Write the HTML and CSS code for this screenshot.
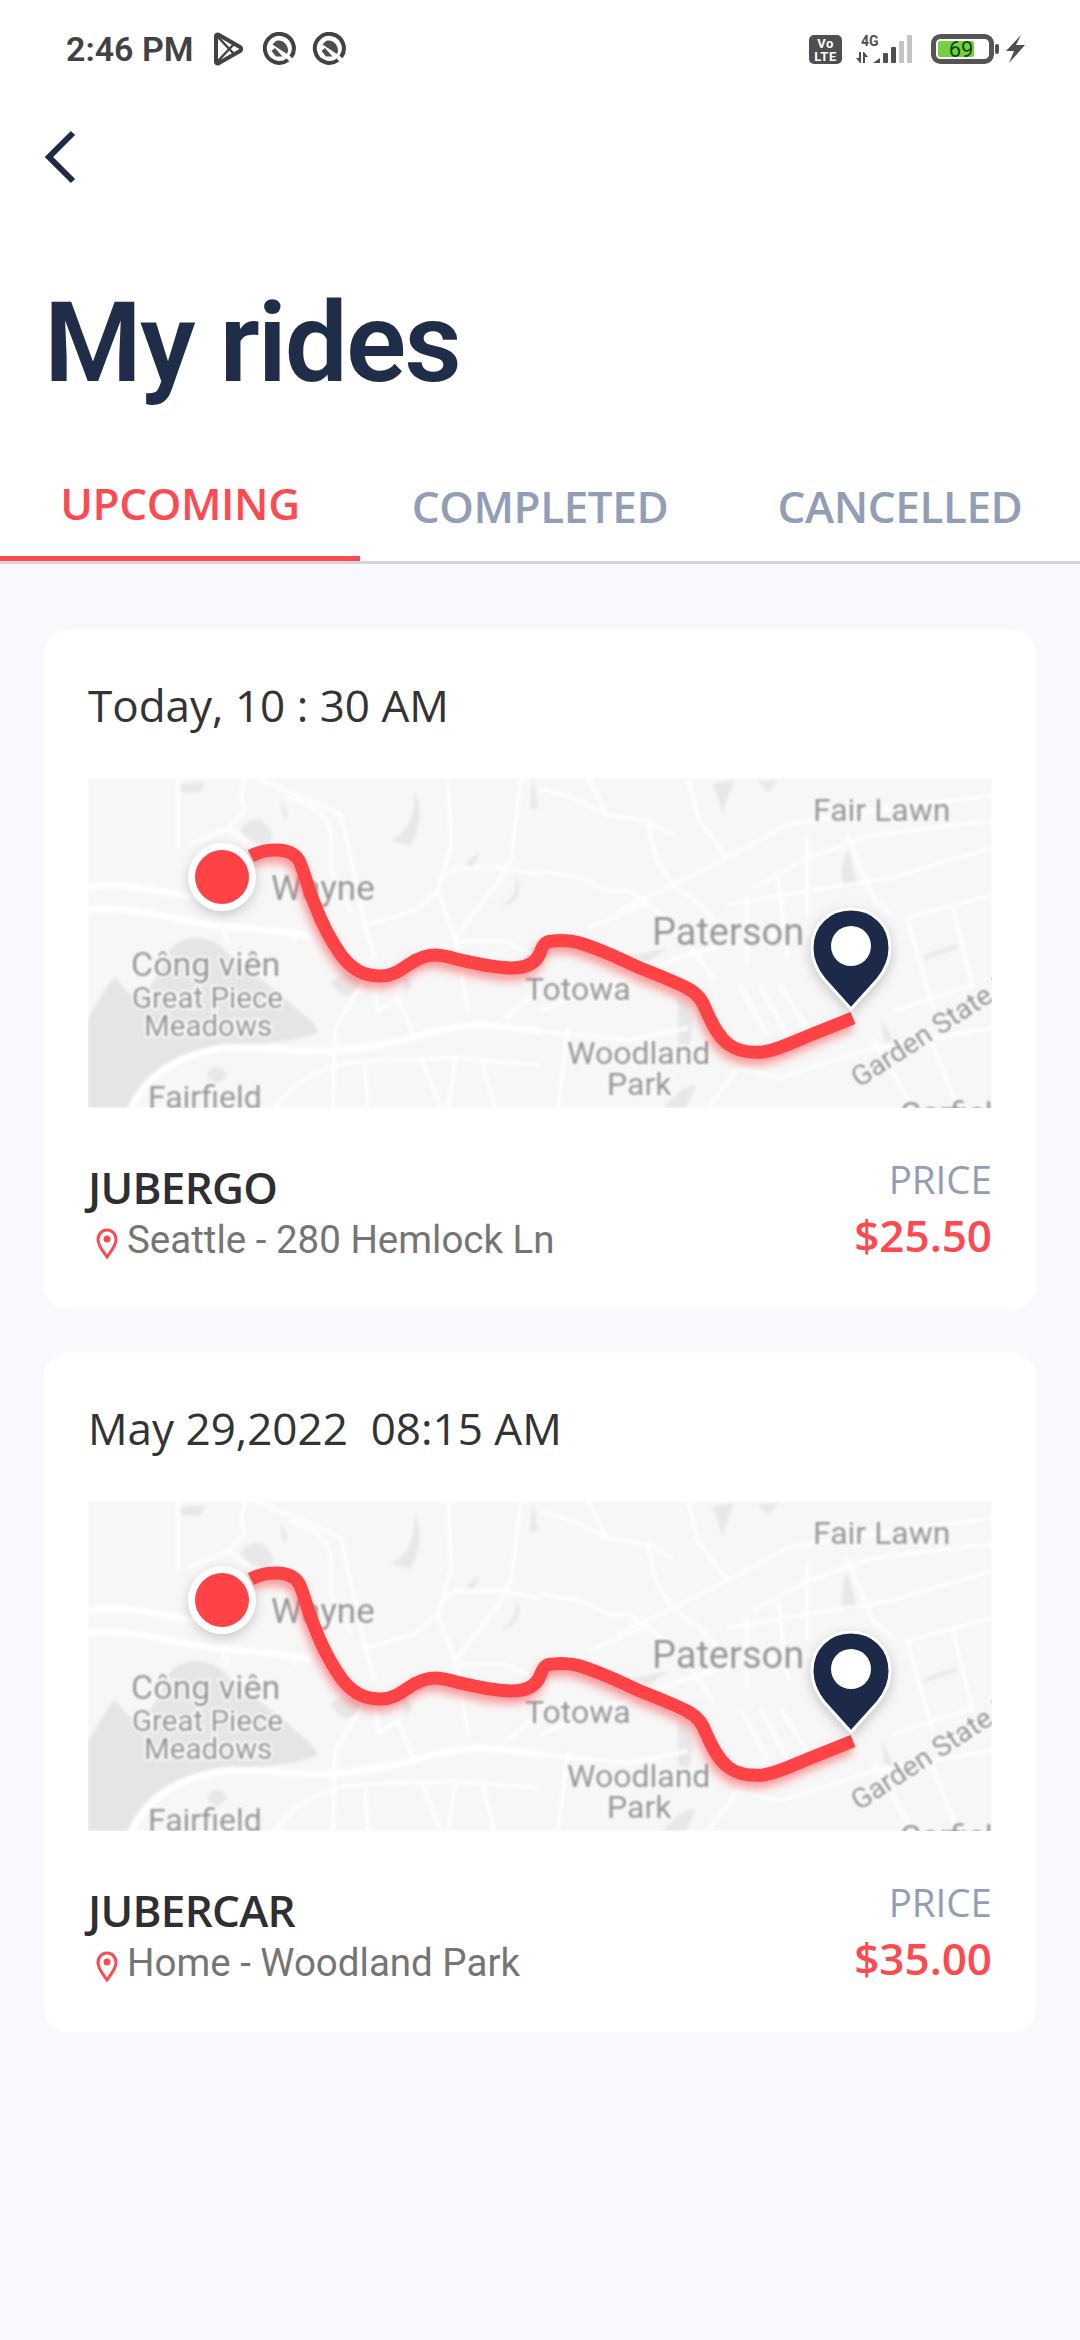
FILE: index.html
```html
<!DOCTYPE html>
<html lang="en">
<head>
  <meta charset="UTF-8">
  <meta name="viewport" content="width=device-width, initial-scale=1.0">
  <title>My rides</title>
  <link rel="stylesheet" href="styles.css">
</head>
<body>

  <!-- shared map pieces -->
  <svg class="defs" xmlns="http://www.w3.org/2000/svg">
    <symbol id="map-base" viewBox="0 0 904 330">
      <rect class="land" width="904" height="330"/>
      <g class="patch">
        <path d="M0 240 C10 225 20 205 27 199 C33 205 36 214 44 216 C56 220 66 205 74 190 C78 170 90 160 108 160 C126 160 136 170 146 182 C165 196 190 212 205 228 C218 238 228 246 230 254 C215 262 180 266 133 268 C90 272 60 295 40 330 L0 330 Z"/>
      </g>
      <g class="patch-light">
        <path d="M243 204 C250 196 262 192 270 200 C274 208 266 216 258 218 C252 216 246 210 243 204 Z"/>
        <path d="M92 6 L117 4 L112 14 L94 15 Z"/>
        <path d="M152 52 C158 42 170 38 178 46 C186 54 188 62 178 66 C168 68 158 60 152 52 Z"/>
        <path d="M192 22 L200 35 L196 42 Z"/>
        <path d="M326 14 C328 40 318 55 303 62 L322 68 C332 50 336 30 326 14 Z"/>
        <path d="M378 84 L392 74 L384 90 Z"/>
        <path d="M428 98 C430 112 424 122 412 128 C428 128 436 112 428 98 Z"/>
        <path d="M118 297 C124 286 134 286 140 298 L128 306 Z"/>
        <path d="M310 190 L325 205 L318 215 Z"/>
        <path d="M445 0 L450 30 L442 32 Z"/>
        <path d="M624 6 L646 2 L634 36 L630 20 Z"/>
        <path d="M670 4 L690 2 L680 14 Z"/>
        <path d="M760 72 L770 108 L756 110 C752 95 754 82 760 72 Z"/>
        <path d="M590 220 C606 225 608 250 600 268 L590 265 Z"/>
        <path d="M575 330 C590 312 600 306 608 308 L598 330 Z"/>
        <path d="M835 178 L868 166 L869 170 L836 182 Z"/>
        <path d="M542 178 L580 170 L560 184 Z"/>
        <path d="M794 240 C800 255 806 262 808 268 L796 262 Z"/>
      </g>
      <g class="road road-wide">
        <path d="M0 110 C33 103 66 112 133 125"/>
        <path d="M0 132 C33 128 66 136 100 143 C140 150 180 150 223 158"/>
        <path d="M43 330 C55 305 77 280 133 270 C170 266 210 276 243 273 C280 270 320 262 333 257 C360 250 385 246 400 247 L452 253"/>
      </g>
      <g class="road">
        <path d="M90 0 L90 70"/>
        <path d="M157 0 L153 17 L157 33 L140 50 L100 67"/>
        <path d="M140 50 L160 64"/>
        <path d="M200 20 C225 26 243 40 243 60 L243 93 L263 133"/>
        <path d="M167 0 L217 20 L253 37 L267 100 L277 147 L287 180"/>
        <path d="M277 147 L327 133 L350 113 L353 100 L367 90 L410 90 L452 97"/>
        <path d="M360 0 L363 67 L350 113 L367 160 L380 233"/>
        <path d="M367 160 L413 100 L423 80 L433 0"/>
        <path d="M367 163 L417 163 L452 180"/>
        <path d="M273 207 L247 250 L245 330"/>
        <path d="M287 200 L290 233 L310 220 L327 260"/>
        <path d="M187 330 C200 312 215 300 233 293 C250 285 265 284 283 283 L367 280 L452 287"/>
        <path d="M277 287 L280 330"/>
        <path d="M333 280 L353 330"/>
        <path d="M393 280 L407 330"/>
        <path d="M367 283 L360 330"/>
        <path d="M417 240 L452 213"/>
        <path d="M133 145 L140 165"/>
        <path d="M200 150 L207 165"/>
        <path d="M452 10 L485 20 L519 37 L559 43 L585 57"/>
        <path d="M559 43 L569 83 L585 107 L612 127 L639 157"/>
        <path d="M452 93 L495 100 L519 113 L542 113 L565 130 L600 160"/>
        <path d="M529 133 L585 107 L639 80 L699 47 L785 33 L904 17"/>
        <path d="M665 110 L719 80 L785 57 L904 43"/>
        <path d="M639 127 L719 113 L802 100 L904 70"/>
        <path d="M659 117 L659 187"/>
        <path d="M719 60 L719 140"/>
        <path d="M759 57 L785 120 L805 137"/>
        <path d="M819 140 L904 117"/>
        <path d="M819 140 L845 230"/>
        <path d="M865 130 L885 210"/>
        <path d="M805 233 L885 207"/>
        <path d="M692 300 L785 270 L904 250"/>
        <path d="M785 260 L825 330"/>
        <path d="M452 233 L519 207 L592 180 L659 160 L760 150"/>
        <path d="M652 207 L679 257"/>
        <path d="M672 207 L699 257"/>
        <path d="M692 207 L719 250"/>
        <path d="M452 253 L540 262 L600 250"/>
        <path d="M620 330 L650 290 L692 300"/>
        <path d="M500 0 L519 37"/>
        <path d="M600 0 L610 40 L639 80"/>
        <path d="M842 260 L870 330"/>
        <path d="M480 250 L470 330"/>
        <path d="M690 100 L700 180"/>
        <path d="M500 150 L560 125"/>
        <path d="M590 150 L625 200"/>
      </g>
    </symbol>

    <symbol id="map-route" viewBox="0 0 904 330">
      <path class="route-glow" d="M163 78 C170 74 178 72 188 72 C202 72 210 78 213 87 C218 100 221 114 227 127 C234 146 244 164 253 177 C266 194 278 198 293 198 C305 198 312 192 320 187 C330 180 338 177 347 177 C358 177 366 181 377 183 C395 187 408 190 423 190 C438 190 448 185 452 175 C455 166 458 163 465 163 C475 162 482 162 492 165 C515 172 532 181 552 190 C570 197 585 203 599 210 C610 216 614 222 618 232 C624 246 630 258 640 266 C650 274 662 275 675 274 C690 272 705 264 720 258 L765 240"/>
      <path class="route" d="M163 78 C170 74 178 72 188 72 C202 72 210 78 213 87 C218 100 221 114 227 127 C234 146 244 164 253 177 C266 194 278 198 293 198 C305 198 312 192 320 187 C330 180 338 177 347 177 C358 177 366 181 377 183 C395 187 408 190 423 190 C438 190 448 185 452 175 C455 166 458 163 465 163 C475 162 482 162 492 165 C515 172 532 181 552 190 C570 197 585 203 599 210 C610 216 614 222 618 232 C624 246 630 258 640 266 C650 274 662 275 675 274 C690 272 705 264 720 258 L765 240"/>
      <circle class="start-ring" cx="134" cy="99" r="34"/>
      <circle class="start-dot" cx="134" cy="99" r="27"/>
      <path class="pin" d="M763 231 L736 201 C728 191 724 181 724 170 C724 147 741 131 763 131 C785 131 802 147 802 170 C802 181 798 191 790 201 Z"/>
      <circle class="pin-hole" cx="763" cy="168" r="20"/>
    </symbol>
  </svg>

  <div class="page">
    <header class="top">
      <div class="status">
        <div class="status-left">
          <span class="time">2:46 PM</span>
          <svg class="icon-play" viewBox="0 0 30 34">
            <path class="line" d="M3 4 C3 2.500 4.500 2 6 3 L27 15 C28.500 16 28.500 18 27 19 L6 31 C4.500 32 3 31.500 3 30 Z"/>
            <path class="line-thin" d="M4 4 L21 22 M4 30 L21 12"/>
          </svg>
          <svg class="icon-q" viewBox="0 0 34 34">
            <path class="line" d="M26 28 A14.500 14.500 0 1 1 29 25"/>
            <path class="solid" d="M10.500 12.500 L14 9 C20 7 26 12 26 19 L25 22 Z"/>
            <path class="solid" d="M9.500 19 L13 16 L20.500 24.500 L14 24.500 Z"/>
          </svg>
          <svg class="icon-q" viewBox="0 0 34 34">
            <path class="line" d="M26 28 A14.500 14.500 0 1 1 29 25"/>
            <path class="solid" d="M10.500 12.500 L14 9 C20 7 26 12 26 19 L25 22 Z"/>
            <path class="solid" d="M9.500 19 L13 16 L20.500 24.500 L14 24.500 Z"/>
          </svg>
        </div>
        <div class="status-right">
          <svg class="icon-volte" viewBox="0 0 33 29">
            <rect class="solid" width="33" height="29" rx="5"/>
            <text class="volte-text" x="16.500" y="13">Vo</text>
            <text class="volte-text" x="16.500" y="25.500">LTE</text>
          </svg>
          <svg class="icon-signal" viewBox="0 0 58 30">
            <text class="net-text" x="5" y="12">4G</text>
            <path class="solid" d="M3 18 L3 24 L0 24 L4 29 L5 29 L5 18 Z M9 29 L9 23 L12 23 L8 18 L7 18 L7 29 Z"/>
            <path class="solid" d="M17 29 L24 24 L24 29 Z"/>
            <rect class="solid" x="27" y="19" width="5" height="10" rx="1"/>
            <rect class="solid" x="35" y="13" width="5" height="16" rx="1"/>
            <rect class="bar-off" x="43" y="7" width="5" height="22" rx="1"/>
            <rect class="bar-off" x="51" y="1" width="5" height="28" rx="1"/>
          </svg>
          <svg class="icon-battery" viewBox="0 0 68 30">
            <rect class="battery-case" x="2.500" y="2.500" width="58" height="25" rx="7"/>
            <rect class="battery-level" x="7" y="7" width="36" height="16" rx="2"/>
            <text class="battery-text" x="30" y="22.500">69</text>
            <rect class="solid" x="64" y="10" width="4" height="10" rx="2"/>
          </svg>
          <svg class="icon-bolt" viewBox="0 0 19 28">
            <path class="solid" d="M15 0 L0 16 L8 16 L3 28 L19 10 L10 10 Z"/>
          </svg>
        </div>
      </div>

      <div class="back">
        <svg class="icon-back" viewBox="0 0 32 54">
          <polyline points="29,3 5,27 29,51"/>
        </svg>
      </div>

      <h1 class="title">My rides</h1>

      <nav class="tabs">
        <div class="tab active">UPCOMING</div>
        <div class="tab">COMPLETED</div>
        <div class="tab">CANCELLED</div>
      </nav>
    </header>

    <main class="list">
      <section class="card">
        <div class="date">Today, 10 : 30 AM</div>
        <svg class="map" viewBox="0 0 904 330">
          <use class="map-soft" href="#map-base"/>
          <g class="map-labels">
            <text class="lbl lbl-wayne" x="183" y="122">Wayne</text>
            <text class="lbl lbl-park" x="43" y="198">Công viên</text>
            <text class="lbl lbl-small" x="44" y="230">Great Piece</text>
            <text class="lbl lbl-small" x="56" y="258">Meadows</text>
            <text class="lbl" x="60" y="330">Fairfield</text>
            <text class="lbl lbl-town" x="437" y="222">Totowa</text>
            <text class="lbl lbl-big" x="564" y="167">Paterson</text>
            <text class="lbl" x="725" y="43">Fair Lawn</text>
            <text class="lbl" x="479" y="286">Woodland</text>
            <text class="lbl" x="519" y="317">Park</text>
            <text class="lbl lbl-road" transform="translate(771 310) rotate(-33)">Garden State P</text>
            <text class="lbl" x="812" y="346">Garfield</text>
          </g>
          <use class="map-soft-route" href="#map-route"/>
        </svg>
        <div class="info">
          <div class="info-left">
            <div class="name">JUBERGO</div>
            <div class="place">
              <svg class="icon-place" viewBox="0 0 22 31">
                <path d="M11 29 C7 23 2 18 2 11.500 C2 6 6 2 11 2 C16 2 20 6 20 11.500 C20 18 15 23 11 29 Z"/>
                <circle cx="11" cy="11" r="3.500"/>
              </svg>
              <span>Seattle - 280 Hemlock Ln</span>
            </div>
          </div>
          <div class="info-right">
            <div class="price-label">PRICE</div>
            <div class="price">$25.50</div>
          </div>
        </div>
      </section>

      <section class="card">
        <div class="date">May 29,2022&nbsp; 08:15 AM</div>
        <svg class="map" viewBox="0 0 904 330">
          <use class="map-soft" href="#map-base"/>
          <g class="map-labels">
            <text class="lbl lbl-wayne" x="183" y="122">Wayne</text>
            <text class="lbl lbl-park" x="43" y="198">Công viên</text>
            <text class="lbl lbl-small" x="44" y="230">Great Piece</text>
            <text class="lbl lbl-small" x="56" y="258">Meadows</text>
            <text class="lbl" x="60" y="330">Fairfield</text>
            <text class="lbl lbl-town" x="437" y="222">Totowa</text>
            <text class="lbl lbl-big" x="564" y="167">Paterson</text>
            <text class="lbl" x="725" y="43">Fair Lawn</text>
            <text class="lbl" x="479" y="286">Woodland</text>
            <text class="lbl" x="519" y="317">Park</text>
            <text class="lbl lbl-road" transform="translate(771 310) rotate(-33)">Garden State P</text>
            <text class="lbl" x="812" y="346">Garfield</text>
          </g>
          <use class="map-soft-route" href="#map-route"/>
        </svg>
        <div class="info">
          <div class="info-left">
            <div class="name">JUBERCAR</div>
            <div class="place">
              <svg class="icon-place" viewBox="0 0 22 31">
                <path d="M11 29 C7 23 2 18 2 11.500 C2 6 6 2 11 2 C16 2 20 6 20 11.500 C20 18 15 23 11 29 Z"/>
                <circle cx="11" cy="11" r="3.500"/>
              </svg>
              <span>Home - Woodland Park</span>
            </div>
          </div>
          <div class="info-right">
            <div class="price-label">PRICE</div>
            <div class="price">$35.00</div>
          </div>
        </div>
      </section>
    </main>
  </div>

</body>
</html>
```

FILE: styles.css
```css
* {
  box-sizing: border-box;
}

body {
  margin: 0;
  background-color: #f8f9fd;
  font-family: 'Open Sans', sans-serif;
}

.defs {
  display: none;
}

.page {
  width: 1080px;
  min-height: 2340px;
}

/* header */
.top {
  background-color: #fff;
}

.status {
  height: 98px;
  padding: 0 55px 0 66px;
  display: flex;
  align-items: center;
  justify-content: space-between;
}

.status-left,
.status-right {
  display: flex;
  align-items: center;
}

.time {
  font-family: Roboto, sans-serif;
  font-weight: 600;
  font-size: 34px;
  color: #424242;
  margin-right: 19px;
}

.icon-play {
  width: 30px;
  height: 34px;
  margin-right: 19px;
}

.icon-q {
  width: 34px;
  height: 34px;
  margin-right: 16px;
}

.icon-volte {
  width: 33px;
  height: 29px;
  margin-right: 14px;
}

.icon-signal {
  width: 58px;
  height: 30px;
  margin-right: 17px;
}

.icon-battery {
  width: 68px;
  height: 30px;
  margin-right: 7px;
}

.icon-bolt {
  width: 19px;
  height: 28px;
}

.line {
  fill: none;
  stroke: #424242;
  stroke-width: 4;
}

.line-thin {
  fill: none;
  stroke: #424242;
  stroke-width: 2.5;
}

.solid {
  fill: #4f4f4f;
}

.bar-off {
  fill: #c4c4c4;
}

.volte-text {
  fill: #fff;
  font-family: Roboto, sans-serif;
  font-weight: 700;
  font-size: 13px;
  letter-spacing: 0.5px;
  text-anchor: middle;
}

.net-text {
  fill: #4f4f4f;
  font-family: Roboto, sans-serif;
  font-weight: 700;
  font-size: 14px;
}

.battery-case {
  fill: none;
  stroke: #555;
  stroke-width: 5;
}

.battery-level {
  fill: #74d040;
}

.battery-text {
  fill: #0d4a10;
  font-family: Roboto, sans-serif;
  font-size: 22px;
  text-anchor: middle;
}

.back {
  padding: 32px 0 0 44px;
  height: 88px;
}

.icon-back {
  display: block;
  width: 32px;
  height: 54px;
}

.icon-back polyline {
  fill: none;
  stroke: #1c2b4a;
  stroke-width: 6;
}

.title {
  margin: 92px 0 42px 44px;
  font-family: Roboto, sans-serif;
  font-weight: 600;
  font-size: 112px;
  letter-spacing: -2px;
  line-height: 130px;
  color: #1f2d48;
}

.tabs {
  display: grid;
  grid-template-columns: repeat(3, 360px);
  border-bottom: 3px solid #d5d5d8;
}

.tab {
  height: 111px;
  display: flex;
  align-items: center;
  justify-content: center;
  font-weight: 600;
  font-size: 44px;
  letter-spacing: -0.4px;
  color: #919eb5;
}

.tab.active {
  color: #fd4a50;
  border-bottom: 5px solid #fd4a50;
}

/* cards */
.list {
  padding: 66px 44px 0;
  display: flex;
  flex-direction: column;
  gap: 44px;
}

.card {
  background-color: #fff;
  border-radius: 24px;
  padding: 45px 44px 0;
  height: 679px;
}

.date {
  font-size: 44px;
  line-height: 60px;
  margin-bottom: 43px;
  color: #333;
}

.map {
  display: block;
  width: 904px;
  height: 330px;
}

.land {
  fill: #f7f7f7;
}

.patch {
  fill: #e5e5e5;
}

.patch-light {
  fill: #e8e8e8;
}

.road {
  fill: none;
  stroke: #fff;
  stroke-width: 3.500;
}

.road-wide {
  stroke-width: 7;
}

.map-soft {
  filter: blur(1.600px);
}

.map-labels {
  filter: blur(1px);
}

.map-soft-route {
  filter: blur(0.700px);
}

.lbl {
  fill: #979797;
  stroke: #fafafa;
  stroke-width: 4px;
  paint-order: stroke;
  font-family: Roboto, sans-serif;
  font-size: 32px;
}

.lbl-wayne {
  font-size: 35px;
}

.lbl-park {
  font-size: 34px;
}

.lbl-small {
  font-size: 29.500px;
}

.lbl-town {
  font-size: 32px;
}

.lbl-big {
  font-size: 38px;
}

.lbl-road {
  font-size: 28px;
}

.route {
  fill: none;
  stroke: #fd4345;
  stroke-width: 13;
}

.route-glow {
  fill: none;
  stroke: #fd4345;
  stroke-width: 13;
  opacity: 0.55;
  transform: translate(-2px, 6px);
  filter: blur(5px);
}

.start-ring {
  fill: #fff;
  filter: drop-shadow(0 4px 6px rgba(0, 0, 0, 0.18));
}

.start-dot {
  fill: #fd4345;
}

.pin {
  fill: #1c2949;
  stroke: #fff;
  stroke-width: 3;
  stroke-linejoin: round;
  filter: drop-shadow(0 4px 6px rgba(0, 0, 0, 0.2));
}

.pin-hole {
  fill: #fff;
}

.info {
  display: flex;
  justify-content: space-between;
  align-items: flex-start;
  padding-top: 48px;
}

.info-left {
  padding-top: 6px;
}

.name {
  font-weight: 600;
  font-size: 44px;
  letter-spacing: -0.7px;
  line-height: 50px;
  color: #2e2e33;
}

.place {
  margin-top: 5px;
  display: flex;
  align-items: center;
  font-family: Roboto, sans-serif;
  font-size: 38.500px;
  line-height: 46px;
  color: #757575;
}

.icon-place {
  width: 22px;
  height: 31px;
  margin: 6px 9px 0 8px;
}

.icon-place path {
  fill: none;
  stroke: #fd4a50;
  stroke-width: 3;
}

.icon-place circle {
  fill: #fd4a50;
}

.info-right {
  text-align: right;
}

.price-label {
  font-size: 38.500px;
  line-height: 46px;
  color: #919eb5;
}

.price {
  margin-top: 8px;
  font-weight: 600;
  font-size: 44px;
  line-height: 50px;
  color: #fd4a50;
}
```
